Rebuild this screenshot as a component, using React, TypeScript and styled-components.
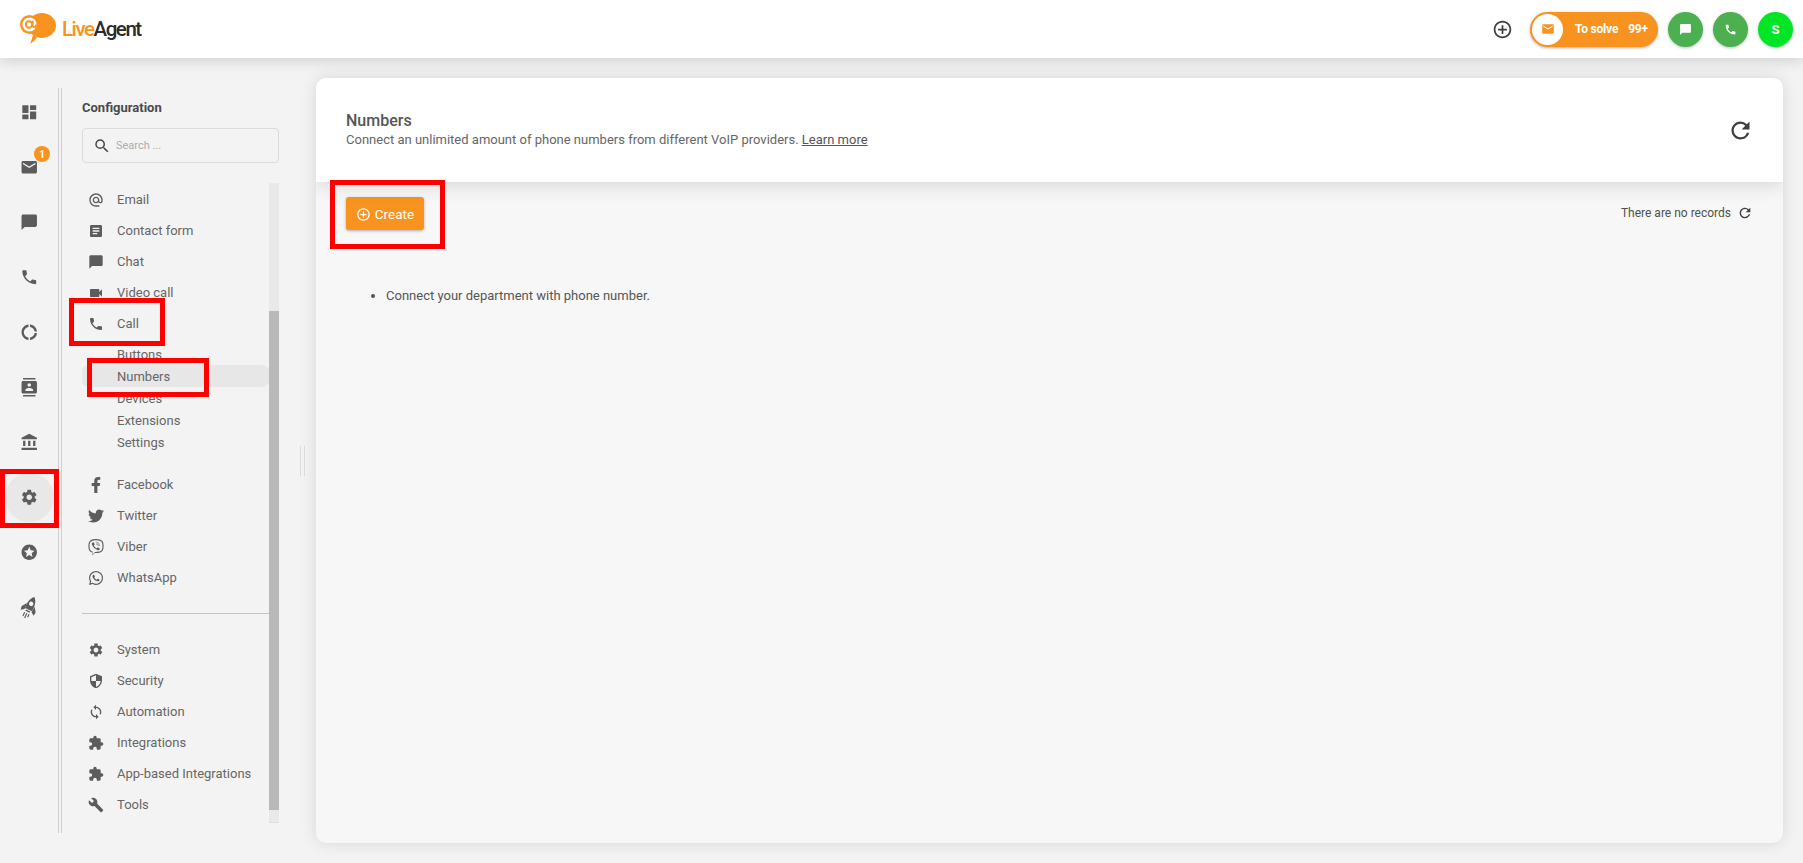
import React from 'react';
import styled, { createGlobalStyle } from 'styled-components';
import {
  MdDashboard, MdEmail, MdChatBubble, MdPhone, MdDonutLarge, MdContacts, MdAccountBalance, MdSettings, MdStars,
  MdSearch, MdAlternateEmail, MdArticle, MdVideocam, MdSecurity, MdSync, MdExtension, MdBuild,
  MdAddCircleOutline, MdRefresh,
} from 'react-icons/md';
import { FaFacebookF, FaTwitter, FaViber, FaWhatsapp } from 'react-icons/fa';

const Global = createGlobalStyle`
  html, body { margin: 0; padding: 0; height: 100%; }
  body { font-family: Roboto, "Liberation Sans", sans-serif; background: #f3f3f3; overflow: hidden; }
  * { box-sizing: border-box; }
`;

const Page = styled.div`
  width: 1803px;
  height: 863px;
  display: flex;
  flex-direction: column;
  position: relative;
  overflow: hidden;
`;

const TopBar = styled.header`
  height: 58px;
  flex: none;
  background: #fff;
  display: flex;
  align-items: center;
  justify-content: space-between;
  padding: 0 10px 0 20px;
  box-shadow: 0 2px 14px rgba(0,0,0,0.16);
  position: relative;
  z-index: 3;
`;

const Logo = styled.div`
  display: flex;
  align-items: center;
  gap: 6px;
  margin-bottom: 1px;
`;

const LogoText = styled.span`
  font-size: 20.5px;
  font-weight: 500;
  letter-spacing: -1.45px;
  color: #f7931e;
  b { color: #2b2b2b; font-weight: 500; }
`;

const TopActions = styled.div`
  display: flex;
  align-items: center;
  gap: 10px;
`;

const PlusButton = styled.div`
  display: flex;
  margin-right: 7px;
  color: #3f3f3f;
  font-size: 21px;
`;

const Pill = styled.div`
  width: 128px;
  height: 35px;
  border-radius: 18px;
  background: #f7931e;
  display: flex;
  align-items: center;
  padding-left: 2px;
  color: #fff;
  font-size: 12px;
  font-weight: 700;
  letter-spacing: -0.2px;
  box-shadow: 0 1px 3px rgba(0,0,0,0.3);
`;

const PillIcon = styled.span`
  width: 31px;
  height: 31px;
  border-radius: 50%;
  background: #fff;
  color: #f7931e;
  display: flex;
  align-items: center;
  justify-content: center;
  font-size: 14px;
  margin-right: 12px;
`;

const PillLabel = styled.span`
  margin-right: 10px;
`;

const RoundButton = styled.div<{ $bg: string }>`
  width: 35px;
  height: 35px;
  border-radius: 50%;
  background: ${p => p.$bg};
  color: #fff;
  display: flex;
  align-items: center;
  justify-content: center;
  font-size: 13px;
  font-weight: 700;
  box-shadow: 0 1px 3px rgba(0,0,0,0.25);
`;

const Body = styled.div`
  flex: 1;
  display: flex;
  min-height: 0;
`;

const Rail = styled.nav`
  width: 59px;
  flex: none;
  margin-top: 30px;
  height: 745px;
  border-right: 1px solid #cfcfcf;
`;

const RailList = styled.div`
  margin-top: -3px;
  display: flex;
  flex-direction: column;
`;

const RailItem = styled.div<{ $active?: boolean }>`
  height: 55px;
  flex: none;
  display: flex;
  align-items: center;
  justify-content: center;
  position: relative;
  color: #5c5c5c;
  font-size: 18.5px;
  &::before {
    content: '';
    display: ${p => (p.$active ? 'block' : 'none')};
    position: absolute;
    left: 5px;
    top: 3px;
    width: 49px;
    height: 49px;
    border-radius: 50%;
    background: #e8e8e8;
  }
  svg { position: relative; }
`;

const Badge = styled.span`
  position: absolute;
  left: 34px;
  top: 6px;
  width: 16px;
  height: 16px;
  border-radius: 50%;
  background: #f7931e;
  color: #fff;
  font-size: 10px;
  font-weight: 700;
  display: flex;
  align-items: center;
  justify-content: center;
`;

const Side = styled.aside`
  width: 220px;
  flex: none;
  margin-top: 30px;
  height: 745px;
  border-left: 1px solid #cfcfcf;
  margin-left: 2px;
  padding: 0 0 0 20px;
  display: flex;
  flex-direction: column;
`;

const SideTitle = styled.div`
  height: 16px;
  margin-top: 12px;
  font-size: 13px;
  line-height: 16px;
  font-weight: 700;
  color: #4a4a4a;
`;

const SearchBox = styled.div`
  width: 197px;
  height: 35px;
  margin-top: 12px;
  flex: none;
  border: 1px solid #dcdcdc;
  border-radius: 4px;
  display: flex;
  align-items: center;
  padding-left: 10px;
  gap: 5px;
  font-size: 11px;
  color: #adadad;
  svg { font-size: 18px; color: #4a4a4a; }
`;

const ScrollArea = styled.div`
  width: 197px;
  height: 640px;
  margin-top: 20px;
  flex: none;
  display: flex;
  position: relative;
`;

const Menu = styled.div`
  width: 187px;
  flex: none;
  padding-top: 1px;
`;

const Row = styled.div`
  height: 31px;
  display: flex;
  align-items: center;
  font-size: 13px;
  color: #666;
`;

const RowIcon = styled.span`
  width: 35px;
  padding-left: 6px;
  flex: none;
  display: flex;
  font-size: 16px;
  color: #5c5c5c;
`;

const SubRow = styled.div<{ $active?: boolean }>`
  height: 22px;
  padding-left: 35px;
  display: flex;
  align-items: center;
  font-size: 13px;
  color: #666;
  border-radius: 6px;
  background: ${p => (p.$active ? '#e7e7e7' : 'transparent')};
`;

const SubList = styled.div`
  margin-top: 4px;
  margin-bottom: 16px;
`;

const Divider = styled.div`
  height: 1px;
  background: #c4c4c4;
  margin: 20px 0;
`;

const ScrollTrack = styled.div`
  width: 10px;
  flex: none;
  background: #e9e9e9;
  padding-top: 128px;
  padding-bottom: 12px;
  border-bottom: 1px solid #e0e0e0;
`;

const ScrollThumb = styled.div`
  height: 100%;
  background: #b9b9b9;
`;

const Grip = styled.div`
  width: 35px;
  flex: none;
  display: flex;
  align-items: center;
  justify-content: center;
  padding-left: 8px;
  &::before {
    content: '';
    width: 3px;
    height: 30px;
    border-left: 1px solid #dcdcdc;
    border-right: 1px solid #dcdcdc;
  }
`;

const Main = styled.main`
  width: 1467px;
  height: 765px;
  flex: none;
  margin-top: 20px;
  background: #f7f7f7;
  border-radius: 10px;
  box-shadow: 0 0 16px rgba(0,0,0,0.12);
  overflow: hidden;
  display: flex;
  flex-direction: column;
`;

const MainHead = styled.div`
  height: 104px;
  flex: none;
  background: #fff;
  box-shadow: 0 3px 18px rgba(0,0,0,0.14);
  display: flex;
  align-items: center;
  justify-content: space-between;
  padding: 0 29px 0 30px;
  position: relative;
`;

const HeadTitle = styled.h1`
  margin: 0 0 1px;
  font-size: 16px;
  line-height: 20px;
  font-weight: 500;
  color: #555;
`;

const HeadSub = styled.p`
  margin: 0 0 1px;
  font-size: 13px;
  line-height: 16px;
  color: #666;
  a { color: #555; text-decoration: underline; }
`;

const HeadRefresh = styled.div`
  display: flex;
  font-size: 27px;
  color: #3f3f3f;
`;

const Toolbar = styled.div`
  display: flex;
  align-items: flex-start;
  justify-content: space-between;
  padding: 15px 30px 0;
`;

const CreateButton = styled.button`
  width: 78px;
  height: 33px;
  border: 0;
  border-radius: 3px;
  padding: 0;
  background: #f7931e;
  color: #fff;
  font-family: inherit;
  font-size: 13.5px;
  display: flex;
  align-items: center;
  justify-content: center;
  gap: 4px;
  box-shadow: 0 1px 3px rgba(0,0,0,0.3);
  svg { font-size: 15px; margin-top: 1px; }
`;

const Records = styled.div`
  display: flex;
  align-items: center;
  gap: 6px;
  font-size: 12px;
  color: #505050;
  height: 31px;
  svg { font-size: 16px; color: #3f3f3f; }
`;

const Hints = styled.ul`
  margin: 58px 0 0;
  padding-left: 70px;
  font-size: 13px;
  line-height: 16px;
  color: #555;
`;

const Mark = styled.div<{ $x: number; $y: number; $w: number; $h: number }>`
  position: absolute;
  left: ${p => p.$x}px;
  top: ${p => p.$y}px;
  width: ${p => p.$w}px;
  height: ${p => p.$h}px;
  border: 5px solid #ff0000;
  z-index: 5;
  pointer-events: none;
`;

const LogoMark = () => (
  <svg width="36" height="31" viewBox="0 0 36 31">
    <ellipse cx="22" cy="12.5" rx="14" ry="12.5" fill="#f7931e" />
    <path d="M13 22L17 24C15.500 27 13 29.500 10 30.500C11.500 28 12 25 13 22Z" fill="#f7931e" />
    <circle cx="9.500" cy="11.500" r="9.500" fill="#f7931e" />
    <circle cx="9.500" cy="11.500" r="7" fill="#fff" />
    <circle cx="9" cy="11.500" r="3.200" fill="none" stroke="#f7931e" strokeWidth="2" />
    <path d="M12.700 7.800V12.500C12.700 15 16 14.800 16 11.500" fill="none" stroke="#f7931e" strokeWidth="1.800" />
  </svg>
);

const RocketIcon = () => (
  <svg width="23" height="25" viewBox="0 0 24 24" fill="currentColor">
    <g transform="rotate(25 12 12)">
      <path fillRule="evenodd" d="M12 0C15.500 3 16.800 8 16 14.500H8C7.200 8 8.500 3 12 0ZM12 5.500A2.300 2.300 0 1 0 12 10.100A2.300 2.300 0 1 0 12 5.500Z" />
      <path d="M7.500 9L4 14L4.500 18L8 15.500ZM16.500 9L20 14L19.500 18L16 15.500Z" />
      <rect x="9.500" y="15.500" width="5" height="1.500" />
      <path d="M9.500 18.500V23M12 18.500V24M14.500 18.500V22" stroke="currentColor" strokeWidth="1.200" fill="none" />
    </g>
  </svg>
);

const topMenu = [
  { label: 'Email', icon: <MdAlternateEmail /> },
  { label: 'Contact form', icon: <MdArticle /> },
  { label: 'Chat', icon: <MdChatBubble /> },
  { label: 'Video call', icon: <MdVideocam /> },
  { label: 'Call', icon: <MdPhone /> },
];
const subMenu = ['Buttons', 'Numbers', 'Devices', 'Extensions', 'Settings'];
const socialMenu = [
  { label: 'Facebook', icon: <FaFacebookF /> },
  { label: 'Twitter', icon: <FaTwitter /> },
  { label: 'Viber', icon: <FaViber /> },
  { label: 'WhatsApp', icon: <FaWhatsapp /> },
];
const systemMenu = [
  { label: 'System', icon: <MdSettings /> },
  { label: 'Security', icon: <MdSecurity /> },
  { label: 'Automation', icon: <MdSync /> },
  { label: 'Integrations', icon: <MdExtension /> },
  { label: 'App-based Integrations', icon: <MdExtension /> },
  { label: 'Tools', icon: <MdBuild /> },
];

const renderRows = (items: { label: string; icon: React.ReactNode }[]) =>
  items.map(item => (
    <Row key={item.label}>
      <RowIcon>{item.icon}</RowIcon>
      {item.label}
    </Row>
  ));

export default function App() {
  return (
    <Page>
      <Global />
      <TopBar>
        <Logo>
          <LogoMark />
          <LogoText>Live<b>Agent</b></LogoText>
        </Logo>
        <TopActions>
          <PlusButton><MdAddCircleOutline /></PlusButton>
          <Pill>
            <PillIcon><MdEmail /></PillIcon>
            <PillLabel>To solve</PillLabel>
            99+
          </Pill>
          <RoundButton $bg="#4caf50"><MdChatBubble /></RoundButton>
          <RoundButton $bg="#4caf50"><MdPhone /></RoundButton>
          <RoundButton $bg="#00e626">S</RoundButton>
        </TopActions>
      </TopBar>
      <Body>
        <Rail>
          <RailList>
            <RailItem><MdDashboard /></RailItem>
            <RailItem><Badge>1</Badge><MdEmail /></RailItem>
            <RailItem><MdChatBubble /></RailItem>
            <RailItem><MdPhone /></RailItem>
            <RailItem><MdDonutLarge /></RailItem>
            <RailItem><MdContacts /></RailItem>
            <RailItem><MdAccountBalance /></RailItem>
            <RailItem $active><MdSettings /></RailItem>
            <RailItem><MdStars /></RailItem>
            <RailItem><RocketIcon /></RailItem>
          </RailList>
        </Rail>
        <Side>
          <SideTitle>Configuration</SideTitle>
          <SearchBox><MdSearch />Search ...</SearchBox>
          <ScrollArea>
            <Menu>
              {renderRows(topMenu)}
              <SubList>
                {subMenu.map(s => <SubRow key={s} $active={s === 'Numbers'}>{s}</SubRow>)}
              </SubList>
              {renderRows(socialMenu)}
              <Divider />
              {renderRows(systemMenu)}
            </Menu>
            <ScrollTrack><ScrollThumb /></ScrollTrack>
          </ScrollArea>
        </Side>
        <Grip />
        <Main>
          <MainHead>
            <div>
              <HeadTitle>Numbers</HeadTitle>
              <HeadSub>
                Connect an unlimited amount of phone numbers from different VoIP providers. <a>Learn more</a>
              </HeadSub>
            </div>
            <HeadRefresh><MdRefresh /></HeadRefresh>
          </MainHead>
          <Toolbar>
            <CreateButton><MdAddCircleOutline />Create</CreateButton>
            <Records>There are no records <MdRefresh /></Records>
          </Toolbar>
          <Hints>
            <li>Connect your department with phone number.</li>
          </Hints>
        </Main>
      </Body>
      <Mark $x={69} $y={298} $w={96} $h={48} />
      <Mark $x={87} $y={358} $w={122} $h={39} />
      <Mark $x={0} $y={469} $w={59} $h={59} />
      <Mark $x={330} $y={180} $w={115} $h={69} />
    </Page>
  );
}
